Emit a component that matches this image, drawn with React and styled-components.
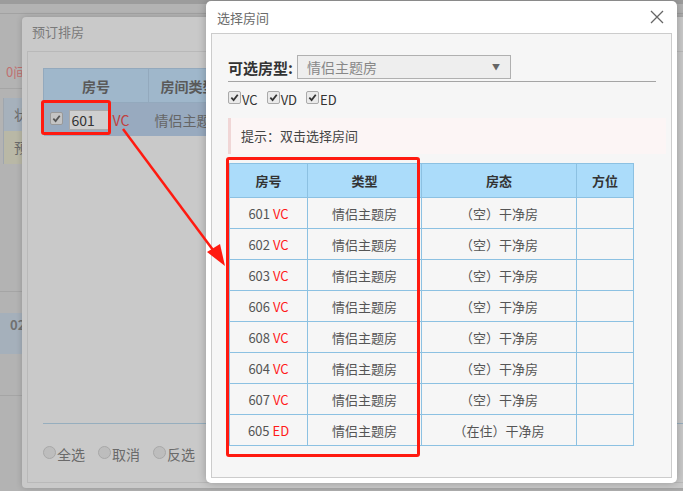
import React from "react";
import styled, { createGlobalStyle } from "styled-components";

const GlobalStyle = createGlobalStyle`
	html, body {
		margin: 0;
		padding: 0;
		width: 683px;
		height: 491px;
		overflow: hidden;
		font-family: "Noto Sans CJK SC", "Noto Sans", sans-serif;
	}
`;

const rooms = [
	{ no: "601", st: "VC", state: "（空）干净房" },
	{ no: "602", st: "VC", state: "（空）干净房" },
	{ no: "603", st: "VC", state: "（空）干净房" },
	{ no: "606", st: "VC", state: "（空）干净房" },
	{ no: "608", st: "VC", state: "（空）干净房" },
	{ no: "604", st: "VC", state: "（空）干净房" },
	{ no: "607", st: "VC", state: "（空）干净房" },
	{ no: "605", st: "ED", state: "（在住）干净房" },
];

const Check = ({ dim }) => (
	<CheckBox $dim={dim}>
		<svg width="9" height="9" viewBox="0 0 10 10">
			<path d="M1.5 5.2 L4 7.8 L8.6 2" fill="none" stroke={dim ? "#555" : "#333"} strokeWidth="2" />
		</svg>
	</CheckBox>
);

const App = () => {
	return (
		<Screen>
			<GlobalStyle />
			{/* page behind the mask */}
			<Page>
				<PageTop />
				<PageBar />
				<PageCount>0间</PageCount>
				<PageRule />
				<PageRow $bg="#a6b1bc">状</PageRow>
				<PageRow $bg="#b9b8a6">预</PageRow>
				<PageGap />
				<PageDate>
					<b>02</b>
					<span>日</span>
				</PageDate>
				<PageRule />
			</Page>

			{/* 预订排房 dialog */}
			<BackDialog>
				<BackTitle>预订排房</BackTitle>
				<BackBody>
					<BackTable>
						<thead>
							<tr>
								<BackTh $w={104}>房号</BackTh>
								<BackTh>房间类型</BackTh>
							</tr>
						</thead>
						<tbody>
							<tr>
								<BackTd>
									<RoomCell>
										<Check dim />
										<RoomInput>601</RoomInput>
										<Red $dim>VC</Red>
									</RoomCell>
								</BackTd>
								<BackTd>情侣主题房</BackTd>
							</tr>
						</tbody>
					</BackTable>
					<BackSpacer />
					<BackFooter>
						<Radio>
							<RadioDot />全选
						</Radio>
						<Radio>
							<RadioDot />取消
						</Radio>
						<Radio>
							<RadioDot />反选
						</Radio>
					</BackFooter>
				</BackBody>
			</BackDialog>

			{/* 选择房间 dialog */}
			<Dialog>
				<TitleBar>
					<Title>选择房间</Title>
					<svg width="14" height="14" viewBox="0 0 14 14">
						<path d="M1 1 L13 13 M13 1 L1 13" stroke="#666" strokeWidth="1.3" />
					</svg>
				</TitleBar>
				<Body>
					<FilterRow>
						<Label>可选房型:</Label>
						<Select>
							情侣主题房
							<Caret>▼</Caret>
						</Select>
					</FilterRow>
					<CheckRow>
						<CheckItem>
							<Check />VC
						</CheckItem>
						<CheckItem>
							<Check />VD
						</CheckItem>
						<CheckItem>
							<Check />ED
						</CheckItem>
					</CheckRow>
					<Hint>提示：双击选择房间</Hint>
					<Table>
						<colgroup>
							<col style={{ width: 78 }} />
							<col style={{ width: 114 }} />
							<col style={{ width: 155 }} />
							<col style={{ width: 57 }} />
						</colgroup>
						<thead>
							<tr>
								<Th>房号</Th>
								<Th>类型</Th>
								<Th>房态</Th>
								<Th>方位</Th>
							</tr>
						</thead>
						<tbody>
							{rooms.map((r) => (
								<tr key={r.no}>
									<Td>
										{r.no} <Red>{r.st}</Red>
									</Td>
									<Td>情侣主题房</Td>
									<Td>{r.state}</Td>
									<Td />
								</tr>
							))}
						</tbody>
					</Table>
				</Body>
			</Dialog>

			{/* annotations */}
			<Mark $x={41} $y={100} $w={70} $h={35} />
			<Mark $x={226} $y={157} $w={194} $h={300} />
			<Arrow width="683" height="491" viewBox="0 0 683 491">
				<line x1="123" y1="129" x2="216" y2="254" stroke="#ff1a10" strokeWidth="2.5" />
				<polygon points="225,266 207,252 220,244" fill="#ff1a10" />
			</Arrow>
		</Screen>
	);
};

export default App;

const Screen = styled.div`
	position: relative;
	width: 683px;
	height: 491px;
	overflow: hidden;
	background: #b3b3b3;
`;

const Page = styled.div`
	display: flex;
	flex-direction: column;
	width: 683px;
`;

const PageTop = styled.div`
	height: 4px;
	background: #9c9c9c;
`;

const PageBar = styled.div`
	height: 9px;
	border-bottom: 1px solid #a2a2a2;
	margin-bottom: 46px;
`;

const PageCount = styled.div`
	height: 28px;
	padding-left: 6px;
	font-size: 13px;
	line-height: 24px;
	color: #c07070;
`;

const PageRule = styled.div`
	height: 1px;
	background: #a5a5a5;
	margin-bottom: 9px;
`;

const PageRow = styled.div`
	height: 33px;
	padding-left: 10px;
	border-left: 1px solid #9fa6ae;
	margin-left: 3px;
	background: ${(p) => p.$bg};
	font-size: 14px;
	line-height: 33px;
	color: #6a6a6a;
`;

const PageGap = styled.div`
	height: 127px;
	border-bottom: 1px solid #a5a5a5;
	margin-bottom: 21px;
`;

const PageDate = styled.div`
	height: 41px;
	background: #a5b0bb;
	display: flex;
	flex-direction: column;
	padding: 4px 0 0 10px;
	box-sizing: border-box;
	margin-bottom: 41px;
	font-size: 13px;
	color: #717171;
	line-height: 16px;
	span {
		padding-left: 18px;
	}
`;

const BackDialog = styled.div`
	position: absolute;
	left: 22px;
	top: 17px;
	width: 680px;
	height: 471px;
	background: #c9c9c9;
	border-radius: 4px;
	box-shadow: 0 0 6px rgba(0, 0, 0, 0.18);
	display: flex;
	flex-direction: column;
	padding: 0 5px 5px 5px;
	box-sizing: border-box;
`;

const BackTitle = styled.div`
	height: 34px;
	line-height: 30px;
	padding-left: 5px;
	font-size: 13px;
	color: #7a7a7a;
`;

const BackBody = styled.div`
	flex: 1;
	border: 1px solid #b9b9b9;
	padding: 16px 0 0 15px;
	display: flex;
	flex-direction: column;
`;

const BackTable = styled.table`
	border-collapse: collapse;
	width: 186px;
	font-size: 13px;
`;

const BackTh = styled.th`
	width: ${(p) => (p.$w ? `${p.$w}px` : "auto")};
	height: 33px;
	padding: 0;
	background: #9fb7cb;
	border: 1px solid #93a9bd;
	color: #5a5a5a;
	font-weight: bold;
	font-size: 14px;
	text-align: center;
	white-space: nowrap;
`;

const BackTd = styled.td`
	height: 33px;
	padding: 0 0 0 6px;
	background: #98aabf;
	color: #666;
	font-size: 14px;
	text-align: left;
	white-space: nowrap;
`;

const RoomCell = styled.div`
	display: flex;
	align-items: center;
	gap: 6px;
`;

const RoomInput = styled.div`
	width: 37px;
	height: 18px;
	border: 1px solid #aaa;
	background: #cfcfcf;
	font-size: 14px;
	line-height: 18px;
	padding-left: 2px;
	color: #333;
	margin-right: -3px;
`;

const BackSpacer = styled.div`
	flex: 1;
	border-bottom: 1px solid #96aebe;
	margin-bottom: 19px;
`;

const BackFooter = styled.div`
	display: flex;
	gap: 13px;
	height: 39px;
`;

const Radio = styled.div`
	display: flex;
	align-items: center;
	height: 22px;
	font-size: 14px;
	color: #6a6a6a;
`;

const RadioDot = styled.span`
	width: 11px;
	height: 11px;
	border-radius: 50%;
	border: 1px solid #a8a8a8;
	background: #bdbdbd;
	margin-right: 1px;
	margin-top: -3px;
`;

const Dialog = styled.div`
	position: absolute;
	left: 206px;
	top: 1px;
	width: 471px;
	height: 482px;
	background: #fff;
	border-radius: 5px;
	box-shadow: 0 0 8px rgba(0, 0, 0, 0.25);
	display: flex;
	flex-direction: column;
	padding: 0 5px 5px 5px;
	box-sizing: border-box;
`;

const TitleBar = styled.div`
	height: 32px;
	display: flex;
	align-items: center;
	justify-content: space-between;
	padding: 0 13px 0 11px;
	margin: 0 -5px;
`;

const Title = styled.span`
	font-size: 13px;
	color: #6b6b6b;
`;

const Body = styled.div`
	flex: 1;
	border: 1px solid #ccc;
	background: #f6f6f6;
	padding: 21px 0 0 16px;
`;

const FilterRow = styled.div`
	width: 428px;
	display: flex;
	align-items: center;
	gap: 4px;
	padding-bottom: 2px;
	border-bottom: 1px solid #a5a5a5;
`;

const Label = styled.span`
	font-size: 15px;
	font-weight: bold;
	color: #333;
`;

const Select = styled.div`
	position: relative;
	width: 214px;
	height: 24px;
	box-sizing: border-box;
	border: 1px solid #b0b0b0;
	background: #eee;
	font-size: 14px;
	line-height: 22px;
	padding-left: 9px;
	color: #888;
`;

const Caret = styled.span`
	position: absolute;
	right: 10px;
	top: 0;
	font-size: 8px;
	color: #666;
`;

const CheckRow = styled.div`
	display: flex;
	gap: 9px;
	margin-top: 8px;
	height: 18px;
`;

const CheckItem = styled.span`
	display: flex;
	align-items: center;
	gap: 1px;
	font-size: 13px;
	color: #333;
`;

const CheckBox = styled.span`
	display: inline-flex;
	align-items: center;
	justify-content: center;
	width: 11px;
	height: 11px;
	border: 1px solid ${(p) => (p.$dim ? "#999" : "#aaa")};
	border-radius: 2px;
	background: ${(p) => (p.$dim ? "#c4c4c4" : "#eaeaea")};
	margin-top: -3px;
`;

const Hint = styled.div`
	width: 425px;
	height: 36px;
	margin-top: 10px;
	border-left: 3px solid #f0d6d6;
	background: #fcf5f5;
	padding-left: 10px;
	font-size: 13px;
	line-height: 36px;
	color: #444;
`;

const Table = styled.table`
	border-collapse: collapse;
	table-layout: fixed;
	width: 404px;
	margin: 9px 0 0 1px;
	font-size: 13px;
`;

const Th = styled.th`
	height: 33px;
	padding: 0;
	background: #abdcfa;
	border: 1px solid #8cc1e2;
	color: #333;
	font-weight: bold;
	font-size: 13px;
	text-align: center;
`;

const Td = styled.td`
	height: 30px;
	padding: 0;
	border: 1px solid #8cc1e2;
	color: #555;
	text-align: center;
`;

const Red = styled.span`
	color: ${(p) => (p.$dim ? "#c04040" : "#ff1a1a")};
`;

const Mark = styled.div`
	position: absolute;
	left: ${(p) => p.$x}px;
	top: ${(p) => p.$y}px;
	width: ${(p) => p.$w}px;
	height: ${(p) => p.$h}px;
	box-sizing: border-box;
	border: 3px solid #ff1a10;
	border-radius: 3px;
`;

const Arrow = styled.svg`
	position: absolute;
	left: 0;
	top: 0;
	pointer-events: none;
`;
